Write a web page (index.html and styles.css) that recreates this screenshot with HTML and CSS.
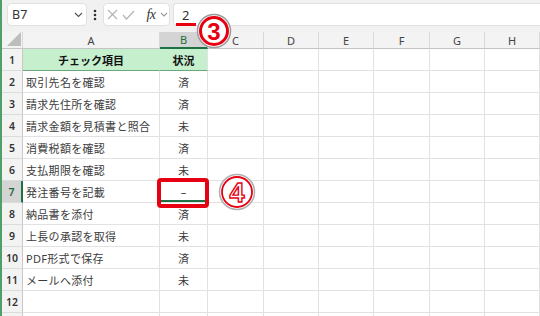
FILE: index.html
```html
<!DOCTYPE html>
<html lang="ja">
<head>
    <meta charset="UTF-8">
    <title>チェックリスト</title>
    <link rel="stylesheet" href="styles.css">
</head>
<body>
<div class="app">
    <div class="toolbar">
        <div class="namebox">
            <span>B7</span>
            <svg width="9" height="6" viewBox="0 0 9 6"><polyline points="1,1 4.5,4.5 8,1" fill="none" stroke="#555" stroke-width="1.2"/></svg>
        </div>
        <div class="dots">
            <svg width="4" height="12" viewBox="0 0 4 12"><circle cx="2" cy="2" r="1.3" fill="#333"/><circle cx="2" cy="6" r="1.3" fill="#333"/><circle cx="2" cy="10" r="1.3" fill="#333"/></svg>
        </div>
        <div class="fxbox">
            <span class="ic ic-x"><svg width="11" height="11" viewBox="0 0 11 11"><path d="M1 1 L10 10 M10 1 L1 10" stroke="#b4b4b4" stroke-width="1.2"/></svg></span>
            <span class="ic ic-ok"><svg width="13" height="10" viewBox="0 0 13 10"><polyline points="1,5 4.5,9 12,1" fill="none" stroke="#b4b4b4" stroke-width="1.2"/></svg></span>
            <span class="ic ic-fx">fx</span>
            <span class="ic ic-dd"><svg width="8" height="5" viewBox="0 0 8 5"><polyline points="1,1 4,4 7,1" fill="none" stroke="#999" stroke-width="1.1"/></svg></span>
        </div>
        <div class="formula"><span>2</span></div>
    </div>

    <div class="sheet">
        <div class="row head">
            <div class="corner"><span class="tri"></span></div>
            <div>A</div><div class="sel">B</div><div>C</div><div>D</div><div>E</div><div>F</div><div>G</div><div>H</div>
        </div>
        <div class="row">
            <div class="rh">1</div>
            <div class="hd hd-a">チェック項目</div><div class="hd">状況</div>
            <div></div><div></div><div></div><div></div><div></div><div></div>
        </div>
        <div class="row">
            <div class="rh">2</div>
            <div class="a">取引先名を確認</div><div class="b">済</div>
            <div></div><div></div><div></div><div></div><div></div><div></div>
        </div>
        <div class="row">
            <div class="rh">3</div>
            <div class="a">請求先住所を確認</div><div class="b">済</div>
            <div></div><div></div><div></div><div></div><div></div><div></div>
        </div>
        <div class="row">
            <div class="rh">4</div>
            <div class="a">請求金額を見積書と照合</div><div class="b">未</div>
            <div></div><div></div><div></div><div></div><div></div><div></div>
        </div>
        <div class="row">
            <div class="rh">5</div>
            <div class="a">消費税額を確認</div><div class="b">済</div>
            <div></div><div></div><div></div><div></div><div></div><div></div>
        </div>
        <div class="row">
            <div class="rh">6</div>
            <div class="a">支払期限を確認</div><div class="b">未</div>
            <div></div><div></div><div></div><div></div><div></div><div></div>
        </div>
        <div class="row">
            <div class="rh sel">7</div>
            <div class="a">発注番号を記載</div><div class="b cur">–</div>
            <div></div><div></div><div></div><div></div><div></div><div></div>
        </div>
        <div class="row">
            <div class="rh">8</div>
            <div class="a">納品書を添付</div><div class="b">済</div>
            <div></div><div></div><div></div><div></div><div></div><div></div>
        </div>
        <div class="row">
            <div class="rh">9</div>
            <div class="a">上長の承認を取得</div><div class="b">未</div>
            <div></div><div></div><div></div><div></div><div></div><div></div>
        </div>
        <div class="row">
            <div class="rh">10</div>
            <div class="a">PDF形式で保存</div><div class="b">済</div>
            <div></div><div></div><div></div><div></div><div></div><div></div>
        </div>
        <div class="row">
            <div class="rh">11</div>
            <div class="a">メールへ添付</div><div class="b">未</div>
            <div></div><div></div><div></div><div></div><div></div><div></div>
        </div>
        <div class="row">
            <div class="rh">12</div>
            <div></div><div></div>
            <div></div><div></div><div></div><div></div><div></div><div></div>
        </div>
        <div class="row">
            <div class="rh"></div>
            <div></div><div></div>
            <div></div><div></div><div></div><div></div><div></div><div></div>
        </div>
    </div>

    <!-- annotations -->
    <span class="underline"></span>
    <svg class="num num-3" width="36" height="36" viewBox="0 0 36 36">
        <circle cx="18" cy="18" r="16.5" fill="#fff" stroke="#9a9a9a" stroke-width="1.5"/>
        <circle cx="18" cy="18" r="13.5" fill="#fff" stroke="#e60012" stroke-width="3"/>
        <text x="18" y="26.5" text-anchor="middle" class="num-t">3</text>
    </svg>
    <span class="redbox"></span>
    <svg class="num num-4" width="38" height="38" viewBox="0 0 38 38">
        <circle cx="19" cy="19" r="17.5" fill="#fff" stroke="#b0b0b0" stroke-width="1.5"/>
        <circle cx="19" cy="19" r="15" fill="#fff" stroke="#e60012" stroke-width="1.8"/>
        <text x="19" y="29" text-anchor="middle" class="num-o">4</text>
    </svg>
</div>
</body>
</html>
```

FILE: styles.css
```css
html, body {
    margin: 0;
    width: 540px;
    height: 316px;
    overflow: hidden;
    background: #fff;
}
body {
    font-family: "Noto Sans", "Noto Sans CJK JP", sans-serif;
    color: #333;
}
.app {
    position: relative;
    height: 316px;
    border-left: 2px solid #4f9f6a;
}

/* formula bar */
.toolbar {
    display: flex;
    align-items: center;
    height: 32px;
    padding: 3px 0 6px 5px;
    box-sizing: border-box;
    background: #f1f1f1;
}
.namebox {
    width: 80px;
    height: 23px;
    box-sizing: border-box;
    background: #fff;
    border: 1px solid #e0e0e0;
    border-radius: 4px;
    display: flex;
    align-items: center;
    justify-content: space-between;
    padding: 0 3px 0 4px;
    font-size: 12.5px;
    color: #333;
}
.dots {
    width: 16px;
    display: flex;
    justify-content: center;
}
.fxbox {
    width: 67px;
    height: 23px;
    box-sizing: border-box;
    background: #fff;
    border: 1px solid #e0e0e0;
    border-radius: 4px;
    display: flex;
    align-items: center;
}
.ic {
    display: flex;
    justify-content: center;
    align-items: center;
}
.ic-x, .ic-ok { width: 16px; }
.ic-fx {
    width: 18px;
    margin-left: 6px;
    font-family: "Liberation Serif", serif;
    font-style: italic;
    font-size: 14px;
    color: #333;
    letter-spacing: -0.5px;
}
.ic-dd { width: 8px; }
.formula {
    flex: 1;
    height: 23px;
    margin-left: 3px;
    box-sizing: border-box;
    background: #fff;
    border: 1px solid #e0e0e0;
    border-right: none;
    border-radius: 4px 0 0 4px;
    display: flex;
    align-items: center;
    padding-left: 8px;
    font-size: 13px;
    color: #333;
}

/* grid */
.row {
    display: grid;
    grid-template-columns: 21px 137px 48px 56px 55px 55px 56px 55px 55px;
    height: 22px;
}
.row > div {
    box-sizing: border-box;
    border-right: 1px solid #e2e2e2;
    border-bottom: 1px solid #e2e2e2;
    display: flex;
    align-items: center;
    white-space: nowrap;
    overflow: hidden;
}
.row.head { height: 17px; }
.row.head > div {
    background: #f3f3f3;
    justify-content: center;
    font-size: 11px;
    color: #444;
    border-right-color: #d8d8d8;
    border-bottom: 1px solid #c4c4c4;
}
.row.head > .sel {
    background: #d4d4d4;
    color: #1d6b3a;
    border-bottom: 2px solid #1e7145;
}
.corner {
    position: relative;
}
.tri {
    position: absolute;
    right: 1px;
    bottom: 2px;
    width: 14px;
    height: 14px;
    background: #bdbdbd;
    clip-path: polygon(100% 0, 100% 100%, 0 100%);
}
.row > .rh {
    background: #f3f3f3;
    justify-content: center;
    font-size: 10.5px;
    font-weight: 600;
    color: #333;
    border-right: 1px solid #c8c8c8;
    border-bottom-color: #dcdcdc;
}
.row > .rh.sel {
    background: #d4d4d4;
    color: #1d6b3a;
    border-right: 2px solid #1e7145;
}
.row > .hd {
    background: #c6efce;
    justify-content: center;
    font-weight: bold;
    font-size: 11px;
    color: #111;
    border-bottom: 1px solid #6aa87b;
}
.row > .hd-a {
    border-right-color: #c6efce;
}
.row > .a {
    padding-left: 3px;
    font-size: 11px;
    letter-spacing: 0.3px;
    color: #3c3c3c;
}
.row > .b {
    justify-content: center;
    font-size: 11px;
    color: #3c3c3c;
}
.row > .cur {
    box-shadow: inset 0 -2px 0 #1e7145;
}

/* annotations */
.underline {
    position: absolute;
    left: 174px;
    top: 23px;
    width: 20px;
    height: 3px;
    background: #e60012;
}
.num {
    position: absolute;
}
.num-3 {
    left: 194px;
    top: 13px;
}
.num-4 {
    left: 216px;
    top: 173px;
}
.num-t {
    font-family: "Liberation Sans", sans-serif;
    font-weight: bold;
    font-size: 24px;
    fill: #e60012;
}
.num-o {
    font-family: "Liberation Sans", sans-serif;
    font-weight: bold;
    font-size: 27px;
    fill: #fff;
    stroke: #e60012;
    stroke-width: 1.4;
}
.redbox {
    position: absolute;
    left: 155px;
    top: 178px;
    width: 52px;
    height: 30px;
    box-sizing: border-box;
    border: 4px solid #e60012;
    border-radius: 4px;
}
```
